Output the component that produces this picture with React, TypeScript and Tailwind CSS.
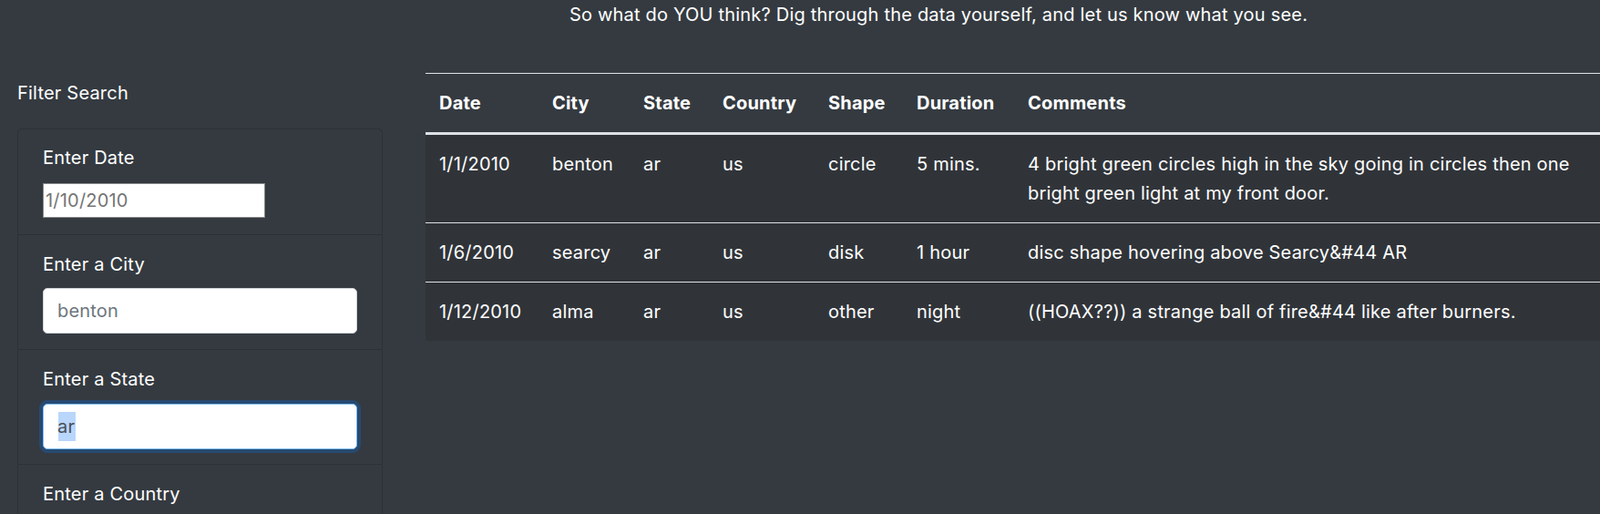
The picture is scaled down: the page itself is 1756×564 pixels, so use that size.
import React from "react";

const rows = [
  {
    date: "1/1/2010",
    city: "benton",
    state: "ar",
    country: "us",
    shape: "circle",
    duration: "5 mins.",
    comments:
      "4 bright green circles high in the sky going in circles then one bright green light at my front door.",
  },
  {
    date: "1/6/2010",
    city: "searcy",
    state: "ar",
    country: "us",
    shape: "disk",
    duration: "1 hour",
    comments: "disc shape hovering above Searcy&#44 AR",
  },
  {
    date: "1/12/2010",
    city: "alma",
    state: "ar",
    country: "us",
    shape: "other",
    duration: "night",
    comments: "((HOAX??)) a strange ball of fire&#44 like after burners.",
  },
];

const headers = ["Date", "City", "State", "Country", "Shape", "Duration", "Comments"];
const widths = ["w-[124px]", "w-[100px]", "w-[87px]", "w-[116px]", "w-[97px]", "w-[122px]", "w-[643px]"];

export default function App() {
  return (
    <div
      className="h-[564px] w-[1756px] overflow-hidden bg-[#343a40] text-[20px] leading-[30px] tracking-[0.2px] text-white"
      style={{ fontFamily: "Inter, 'Noto Sans', sans-serif" }}
    >
      <p className="pl-[304px] pt-[1px] text-center">
        So what do YOU think? Dig through the data yourself, and let us know what you see.
      </p>

      <div className="mt-[49px] flex">
        {/* Left filter column */}
        <div className="w-[467px] shrink-0 pl-[19px]">
          <h5 className="pt-[7px] text-[20px] font-normal leading-[30px]">Filter Search</h5>
          <ul className="mt-[24px] w-[401px] rounded-t-[5px] border border-b-0 border-[#2c3136]">
            <li className="border-b border-[#2c3136] pb-[18px] pl-[27px] pr-[26px] pt-[16px]">
              <label className="block leading-[30px]">Enter Date</label>
              <input
                className="mt-[13px] block h-[38px] w-[244px] border border-[#8a8a8a] bg-white px-[2px] text-[20px] text-[#757575] placeholder:text-[#757575] outline-none"
                placeholder="1/10/2010"
                readOnly
              />
            </li>
            <li className="border-b border-[#2c3136] pb-[16.5px] pl-[27px] pr-[26px] pt-[17px]">
              <label className="block leading-[30px]">Enter a City</label>
              <input
                className="mt-[11px] block h-[50px] w-[345px] rounded-[5px] border border-[#ced4da] bg-white px-[15px] text-[20px] text-[#495057] placeholder:text-[#6c757d] outline-none"
                placeholder="benton"
                readOnly
              />
            </li>
            <li className="border-b border-[#2c3136] pb-[16.5px] pl-[27px] pr-[26px] pt-[17px]">
              <label className="block leading-[30px]">Enter a State</label>
              <div className="relative mt-[12px] h-[50px] w-[345px] rounded-[5px] border border-[#80bdff] bg-white shadow-[0_0_0_4px_rgba(0,123,255,0.25)]">
                <span className="absolute left-[16px] top-[8px] h-[32px] w-[19px] bg-[#b9d6fb]" />
                <input
                  className="relative block h-full w-full bg-transparent px-[15px] text-[20px] text-[#495057] outline-none"
                  value="ar"
                  readOnly
                />
              </div>
            </li>
            <li className="pl-[27px] pr-[26px] pt-[17px]">
              <label className="block leading-[30px]">Enter a Country</label>
              <input
                className="mt-[12px] block h-[50px] w-[345px] rounded-[5px] border border-[#ced4da] bg-white px-[15px] text-[20px] text-[#495057] placeholder:text-[#6c757d] outline-none"
                placeholder="us"
                readOnly
              />
            </li>
          </ul>
        </div>

        {/* Right table column */}
        <div className="min-w-0 flex-1">
          <table className="w-[1289px] table-fixed border-separate border-spacing-0 text-left">
            <colgroup>
              {widths.map((w, i) => (
                <col key={i} className={w} />
              ))}
            </colgroup>
            <thead>
              <tr>
                {headers.map((h) => (
                  <th
                    key={h}
                    className="border-b-[3px] border-t border-[#dee2e6] px-[15px] py-[16px] align-bottom font-bold leading-[32px]"
                  >
                    {h}
                  </th>
                ))}
              </tr>
            </thead>
            <tbody>
              {rows.map((r, i) => {
                const last = i === rows.length - 1;
                const cells = [r.date, r.city, r.state, r.country, r.shape, r.duration, r.comments];
                return (
                  <tr key={i} className="bg-[#303439]">
                    {cells.map((c, j) => (
                      <td
                        key={j}
                        className={
                          last
                            ? "px-[15px] py-[16px] align-top leading-[32px]"
                            : "border-b border-[#dee2e6] px-[15px] py-[16px] align-top leading-[32px]"
                        }
                      >
                        {c}
                      </td>
                    ))}
                  </tr>
                );
              })}
            </tbody>
          </table>
        </div>
      </div>
    </div>
  );
}
